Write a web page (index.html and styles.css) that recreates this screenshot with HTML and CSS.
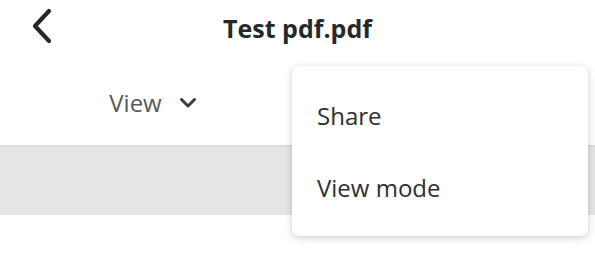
FILE: index.html
```html
<!DOCTYPE html>
<html>
<head>
<meta charset="utf-8">
<link rel="stylesheet" href="styles.css">
</head>
<body>
<div class="app">
  <header class="topbar">
    <button class="back" aria-label="Back">
      <svg width="24" height="36" viewBox="0 0 24 36"><path d="M19 3 L5 18 L19 33" fill="none" stroke="#25282b" stroke-width="4.2" stroke-linecap="round" stroke-linejoin="round"/></svg>
    </button>
    <h1 class="title">Test pdf.pdf</h1>
  </header>
  <div class="tabs">
    <div class="view-tab">
      <span>View</span>
      <svg width="18" height="12" viewBox="0 0 18 12"><path d="M2.5 2.5 L9 9 L15.5 2.5" fill="none" stroke="#3a3d40" stroke-width="3" stroke-linecap="round" stroke-linejoin="round"/></svg>
    </div>
  </div>
  <div class="band"></div>
  <div class="menu">
    <div class="menu-item">Share</div>
    <div class="menu-item">View mode</div>
  </div>
</div>
</body>
</html>
```

FILE: styles.css
```css
* { box-sizing: border-box; }
html, body { margin: 0; padding: 0; background: #fff; }
body { font-family: "Open Sans", "Noto Sans", sans-serif; width: 595px; height: 255px; overflow: hidden; }
.app { position: relative; width: 595px; height: 255px; }
.topbar { height: 56px; display: flex; align-items: center; justify-content: center; position: relative; }
.back { position: absolute; left: 28px; top: 8px; border: 0; background: none; padding: 0; width: 28px; height: 36px; display: flex; align-items: center; justify-content: center; }
.title { margin: 0; font-size: 25px; font-weight: 700; color: #26292c; line-height: 1; }
.tabs { height: 89px; display: flex; }
.view-tab { width: 306px; display: flex; align-items: center; justify-content: center; gap: 17px; color: #55585b; font-size: 24px; padding-top: 4px; }
.view-tab svg { margin-top: 1px; }
.band { height: 70px; background: #e4e6e6; box-shadow: inset 0 2px 2px -1px rgba(0,0,0,0.08); }
.menu { position: absolute; left: 292px; top: 66px; width: 296px; height: 170px; background: #fff; border-radius: 7px; box-shadow: 0 2px 8px rgba(0,0,0,0.18), 0 0 2px rgba(0,0,0,0.06); padding-top: 13px; }
.menu-item { height: 70px; display: flex; align-items: center; padding-left: 25px; font-size: 24px; color: #2d3033; }
.menu-item:first-child { height: 73px; }
```
